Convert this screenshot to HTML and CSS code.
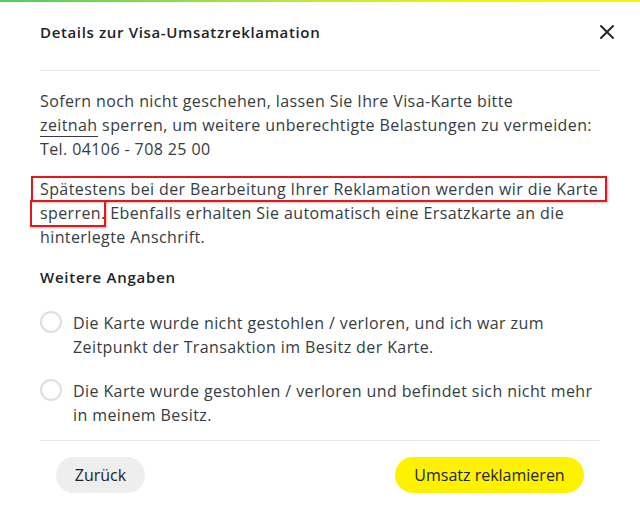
FILE: index.html
```html
<!DOCTYPE html>
<html lang="de">
<head>
<meta charset="utf-8">
<link rel="stylesheet" href="styles.css">
</head>
<body>
<div class="topbar"></div>
<div class="modal">
  <header class="head">
    <h1 class="title">Details zur Visa-Umsatzreklamation</h1>
    <button class="close" aria-label="Schließen">
      <svg width="16" height="16" viewBox="0 0 16 16"><path d="M2 2 L14 14 M14 2 L2 14" stroke="#1f2a33" stroke-width="2" stroke-linecap="round" fill="none"/></svg>
    </button>
  </header>
  <div class="body">
    <p class="para">Sofern noch nicht geschehen, lassen Sie Ihre Visa-Karte bitte<br><a class="link" href="#">zeitnah</a> sperren, um weitere unberechtigte Belastungen zu vermeiden:<br>Tel. 04106 - 708 25 00</p>
    <p class="para marked">Spätestens bei der Bearbeitung Ihrer Reklamation werden wir die Karte<br>sperren. Ebenfalls erhalten Sie automatisch eine Ersatzkarte an die<br>hinterlegte Anschrift.<span class="mark mark1"></span><span class="mark mark2"></span></p>
    <h2 class="sub">Weitere Angaben</h2>
    <label class="opt"><span class="radio"></span><span class="opt-text">Die Karte wurde nicht gestohlen / verloren, und ich war zum<br>Zeitpunkt der Transaktion im Besitz der Karte.</span></label>
    <label class="opt"><span class="radio"></span><span class="opt-text">Die Karte wurde gestohlen / verloren und befindet sich nicht mehr<br>in meinem Besitz.</span></label>
  </div>
  <footer class="foot">
    <button class="btn btn-back">Zurück</button>
    <button class="btn btn-primary">Umsatz reklamieren</button>
  </footer>
</div>
</body>
</html>
```
FILE: styles.css
```css
html, body { margin: 0; padding: 0; background: #fff; }
body {
  font-family: "Open Sans", "Liberation Sans", sans-serif;
  color: #363c41;
  width: 640px;
  height: 520px;
  overflow: hidden;
}
.topbar {
  height: 2px;
  background: linear-gradient(to right, #4fce5d 0%, #b8e83a 45%, #f2f500 75%, #f7f400 100%);
}
.modal { padding: 0 40px; }
.head {
  display: flex;
  justify-content: space-between;
  align-items: center;
  height: 68px;
  border-bottom: 1px solid #e6e8ea;
}
.title {
  margin: 0;
  font-size: 15px;
  font-weight: 600;
  color: #1d2328;
  letter-spacing: 0.65px;
  position: relative;
  top: -4px;
}
.close {
  border: 0;
  background: none;
  padding: 0;
  margin-right: -15px;
  width: 16px;
  height: 16px;
  display: flex;
  position: relative;
  top: -4px;
}
.body { padding-top: 18px; border-bottom: 1px solid #e6e8ea; padding-bottom: 13px; }
.para {
  margin: 0 0 16px;
  font-size: 16px;
  line-height: 24px;
  letter-spacing: 0.4px;
  position: relative;
}
.link { color: inherit; text-decoration: none; border-bottom: 1px solid #363c41; }
.mark {
  position: absolute;
  border: 2px solid #e8151c;
  box-shadow: 1px 1px 2px rgba(0,0,0,0.25);
}
.mark1 { left: -9px; top: -1px; width: 572px; height: 22px; }
.mark2 { left: -10px; top: 23px; width: 72px; height: 23px; }
.sub {
  margin: 15px 0 0;
  font-size: 15px;
  font-weight: 600;
  color: #1d2328;
  letter-spacing: 0.75px;
  line-height: 24px;
}
.opt {
  display: flex;
  gap: 11px;
  align-items: flex-start;
  margin-top: 22px;
  font-size: 16px;
  line-height: 24px;
  letter-spacing: 0.4px;
}
.opt + .opt { margin-top: 20px; }
.radio {
  flex: none;
  width: 18px;
  height: 18px;
  border: 2px solid #dcdfe1;
  border-radius: 50%;
}
.opt-text { display: block; }
.foot {
  display: flex;
  justify-content: space-between;
  padding: 16px 16px 0;
}
.btn {
  font-family: inherit;
  font-size: 16px;
  color: #1d2328;
  border: 0;
  height: 36px;
  border-radius: 18px;
  padding: 0;
}
.btn-back { background: #eeeeee; width: 89px; }
.btn-primary { background: #fff200; width: 189px; }
```
